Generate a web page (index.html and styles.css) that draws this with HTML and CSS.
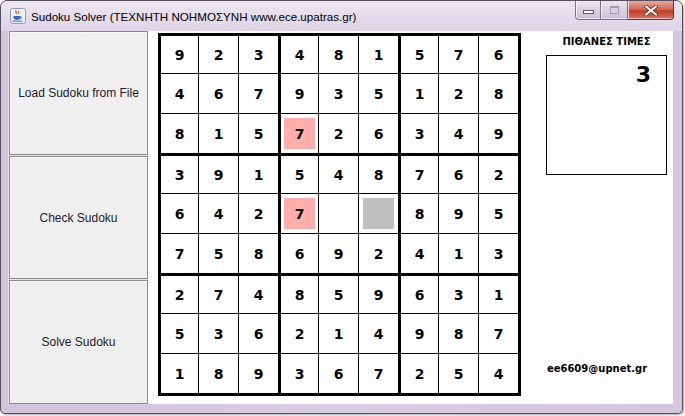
FILE: index.html
```html
<!DOCTYPE html>
<html>
<head>
<meta charset="utf-8">
<link rel="stylesheet" href="styles.css">
</head>
<body>
<div class="window">
  <div class="titlebar">
    <svg class="app-icon" width="16" height="16" viewBox="0 0 16 16">
      <rect x="0.5" y="0.5" width="15" height="15" rx="2" fill="#eef2f8" stroke="#8f9bb4"/>
      <path d="M6 2.2c-1.2 1.4 1.2 2.4 0 4M8.6 2.6c-1 1.3 1 2 0 3.4" stroke="#e0561f" fill="none" stroke-width="1.2"/>
      <path d="M3.5 8h7v1.5c0 1.5-1.3 2.5-3.5 2.5s-3.5-1-3.5-2.5z" fill="#3a6db5"/>
      <path d="M10.4 8.6c1.6 0 1.6 2.2-0.6 2.2" stroke="#3a6db5" fill="none"/>
      <path d="M2.5 13.2h10" stroke="#3a6db5"/>
    </svg>
    <span class="title">Sudoku Solver (ΤΕΧΝΗΤΗ ΝΟΗΜΟΣΥΝΗ www.ece.upatras.gr)</span>
    <div class="controls">
      <div class="ctl ctl-min"><span class="min-glyph"></span></div>
      <div class="ctl ctl-max"><span class="max-glyph"></span></div>
      <div class="ctl ctl-close">
        <svg width="14" height="11" viewBox="0 0 14 11">
          <path d="M2 1.5l10 8M12 1.5l-10 8" stroke="#6b2a22" stroke-width="3.6" stroke-linecap="square"/>
          <path d="M2 1.5l10 8M12 1.5l-10 8" stroke="#ffffff" stroke-width="2" stroke-linecap="square"/>
        </svg>
      </div>
    </div>
  </div>
  <div class="client">
    <div class="left">
      <div class="btn">Load Sudoku from File</div>
      <div class="btn">Check Sudoku</div>
      <div class="btn">Solve Sudoku</div>
    </div>
    <div class="board">
      <div class="box">
        <div class="cell">9</div><div class="cell">2</div><div class="cell">3</div>
        <div class="cell">4</div><div class="cell">6</div><div class="cell">7</div>
        <div class="cell">8</div><div class="cell">1</div><div class="cell">5</div>
      </div>
      <div class="box">
        <div class="cell">4</div><div class="cell">8</div><div class="cell">1</div>
        <div class="cell">9</div><div class="cell">3</div><div class="cell">5</div>
        <div class="cell"><span class="mark pink">7</span></div><div class="cell">2</div><div class="cell">6</div>
      </div>
      <div class="box">
        <div class="cell">5</div><div class="cell">7</div><div class="cell">6</div>
        <div class="cell">1</div><div class="cell">2</div><div class="cell">8</div>
        <div class="cell">3</div><div class="cell">4</div><div class="cell">9</div>
      </div>
      <div class="box">
        <div class="cell">3</div><div class="cell">9</div><div class="cell">1</div>
        <div class="cell">6</div><div class="cell">4</div><div class="cell">2</div>
        <div class="cell">7</div><div class="cell">5</div><div class="cell">8</div>
      </div>
      <div class="box">
        <div class="cell">5</div><div class="cell">4</div><div class="cell">8</div>
        <div class="cell"><span class="mark pink">7</span></div><div class="cell"></div><div class="cell"><span class="mark gray"></span></div>
        <div class="cell">6</div><div class="cell">9</div><div class="cell">2</div>
      </div>
      <div class="box">
        <div class="cell">7</div><div class="cell">6</div><div class="cell">2</div>
        <div class="cell">8</div><div class="cell">9</div><div class="cell">5</div>
        <div class="cell">4</div><div class="cell">1</div><div class="cell">3</div>
      </div>
      <div class="box">
        <div class="cell">2</div><div class="cell">7</div><div class="cell">4</div>
        <div class="cell">5</div><div class="cell">3</div><div class="cell">6</div>
        <div class="cell">1</div><div class="cell">8</div><div class="cell">9</div>
      </div>
      <div class="box">
        <div class="cell">8</div><div class="cell">5</div><div class="cell">9</div>
        <div class="cell">2</div><div class="cell">1</div><div class="cell">4</div>
        <div class="cell">3</div><div class="cell">6</div><div class="cell">7</div>
      </div>
      <div class="box">
        <div class="cell">6</div><div class="cell">3</div><div class="cell">1</div>
        <div class="cell">9</div><div class="cell">8</div><div class="cell">7</div>
        <div class="cell">2</div><div class="cell">5</div><div class="cell">4</div>
      </div>
    </div>
    <div class="side">
      <div class="side-title">ΠΙΘΑΝΕΣ ΤΙΜΕΣ</div>
      <div class="values">3</div>
      <div class="email">ee6609@upnet.gr</div>
    </div>
  </div>
</div>
</body>
</html>
```

FILE: styles.css
```css
html, body {
  margin: 0;
  padding: 0;
}
body {
  width: 685px;
  height: 416px;
  overflow: hidden;
  background: #ffffff;
  font-family: "Liberation Sans", Arial, sans-serif;
}
.window {
  width: 683px;
  height: 414px;
  box-sizing: border-box;
  border: 1px solid #55505e;
  border-radius: 7px 7px 5px 5px;
  background: linear-gradient(90deg, #d2c3dc, #d9cde2 50%, #d3c5dd);
  display: flex;
  flex-direction: column;
  box-shadow: 1px 1px 2px rgba(0, 0, 0, 0.35);
  overflow: hidden;
}
.titlebar {
  height: 30px;
  flex: 0 0 30px;
  display: flex;
  align-items: center;
  padding-left: 9px;
  background: linear-gradient(#ece6f1, #ddd4e6);
}
.app-icon {
  flex: 0 0 16px;
  margin-right: 5px;
}
.title {
  font-family: "Liberation Sans", Arial, sans-serif;
  font-size: 11.6px;
  color: #000;
  white-space: nowrap;
}
.controls {
  margin-left: auto;
  margin-right: 8px;
  align-self: flex-start;
  display: flex;
  height: 19px;
}
.ctl {
  box-sizing: border-box;
  height: 19px;
  border: 1px solid #7c7288;
  border-top: none;
  border-left: none;
  background: linear-gradient(#ece7f1, #d9d1e2 50%, #cbc1d7);
  display: flex;
  align-items: center;
  justify-content: center;
  box-shadow: inset 1px 0 0 rgba(255,255,255,0.7), inset 0 -1px 0 rgba(255,255,255,0.6);
}
.ctl-min {
  width: 26px;
  border-left: 1px solid #7c7288;
  border-bottom-left-radius: 4px;
}
.ctl-max {
  width: 27px;
}
.ctl-close {
  width: 46px;
  border-bottom-right-radius: 4px;
  background: linear-gradient(#e9a99c, #d36a58 45%, #c43b2a 55%, #d9735f);
  border-color: #7a2a22;
}
.min-glyph {
  display: block;
  width: 9px;
  height: 2px;
  margin-top: 4px;
  background: #ffffff;
  border: 1px solid #5e5866;
}
.max-glyph {
  display: block;
  width: 7px;
  height: 5px;
  border: 1px solid #a39bab;
  border-top-width: 2px;
  background: transparent;
}
.client {
  flex: 0 0 373px;
  height: 373px;
  margin: 0 9px 0 7px;
  background: #ffffff;
  display: flex;
}
.left {
  width: 139px;
  flex: 0 0 139px;
  padding-left: 1px;
  display: flex;
  flex-direction: column;
  gap: 1px;
  background: #e6e6e6;
}
.btn {
  flex: 1;
  box-sizing: border-box;
  border: 1px solid #8a8a8a;
  background: #efefef;
  display: flex;
  align-items: center;
  justify-content: center;
  font-size: 12px;
  color: #1c1c2a;
  box-shadow: inset 1px 1px 0 #fafafa;
}
.board {
  margin: 2px 0 0 10px;
  width: 363px;
  height: 363px;
  box-sizing: border-box;
  padding: 3px;
  background: #000;
  display: grid;
  grid-template-columns: repeat(3, 117px);
  grid-template-rows: repeat(3, 117px);
  gap: 3px;
}
.box {
  display: grid;
  grid-template-columns: 37px 39px 39px;
  grid-template-rows: 37px 39px 39px;
  gap: 1px;
  background: #000;
}
.cell {
  background: #ffffff;
  display: flex;
  align-items: center;
  justify-content: center;
  font-family: "DejaVu Sans", Verdana, sans-serif;
  font-weight: bold;
  font-size: 14px;
  color: #000;
}
.mark {
  width: 31px;
  height: 31px;
  display: flex;
  align-items: center;
  justify-content: center;
}
.pink {
  background: #ffadad;
}
.gray {
  background: #c0c0c0;
}
.side {
  flex: 1;
  display: flex;
  flex-direction: column;
  font-family: "DejaVu Sans", Verdana, sans-serif;
  font-weight: bold;
}
.side-title {
  margin: 4px 0 0 25px;
  width: 121px;
  text-align: center;
  font-size: 10px;
  line-height: 14px;
  color: #000;
}
.values {
  margin: 6px 0 0 25px;
  width: 121px;
  height: 120px;
  box-sizing: border-box;
  border: 1px solid #000;
  padding: 6px 15px 0 0;
  text-align: right;
  font-size: 22px;
  line-height: 26px;
  color: #000;
}
.email {
  margin-top: auto;
  padding-bottom: 28px;
  text-align: center;
  font-size: 10px;
  line-height: 14px;
  color: #000;
}
```
